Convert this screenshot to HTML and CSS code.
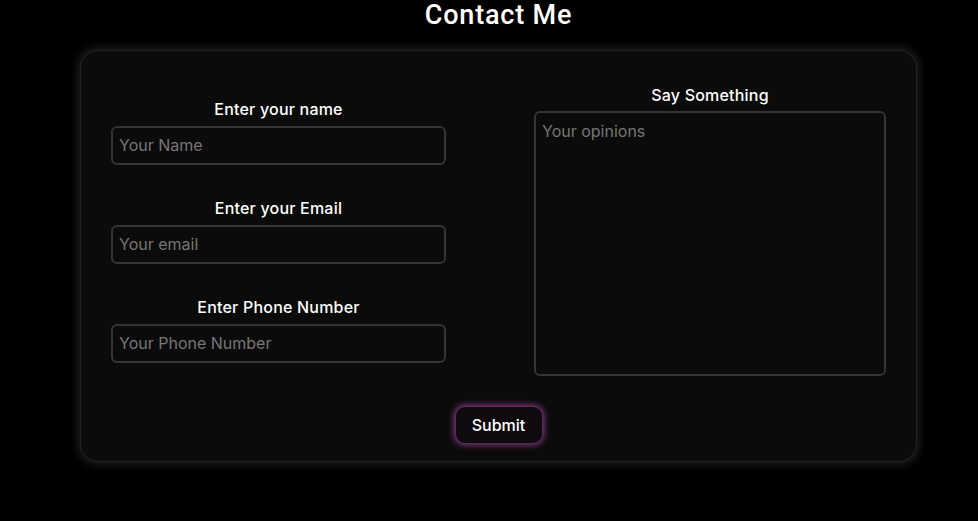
FILE: index.html
```html
<!DOCTYPE html>
<html lang="en">
<head>
<meta charset="utf-8">
<title>Contact Me</title>
<link rel="stylesheet" href="styles.css">
</head>
<body>
<h1 class="title">Contact Me</h1>
<form class="card">
  <div class="columns">
    <div class="left">
      <div class="field">
        <label class="label">Enter your name</label>
        <input class="input" type="text" placeholder="Your Name">
      </div>
      <div class="field">
        <label class="label">Enter your Email</label>
        <input class="input" type="text" placeholder="Your email">
      </div>
      <div class="field">
        <label class="label">Enter Phone Number</label>
        <input class="input" type="text" placeholder="Your Phone Number">
      </div>
    </div>
    <div class="right">
      <label class="label">Say Something</label>
      <textarea class="textarea" placeholder="Your opinions"></textarea>
    </div>
  </div>
  <div class="actions">
    <button class="submit" type="button">Submit</button>
  </div>
</form>
</body>
</html>
```
FILE: styles.css
```css
* { box-sizing: border-box; }
html, body { margin: 0; padding: 0; background: #000; }
body {
  font-family: Inter, "Noto Sans", sans-serif;
  color: #fff;
  height: 521px;
  overflow: hidden;
}
.title {
  margin: 0;
  height: 50px;
  padding: 0 0 0 19px;
  text-align: center;
  font-family: Roboto, "Noto Sans", sans-serif;
  font-weight: 500;
  font-size: 27px;
  line-height: 31px;
  letter-spacing: 0.8px;
}
.card {
  width: 837px;
  margin: 0 0 0 80px;
  height: 412px;
  background: #0b0b0b;
  border: 1px solid #222;
  border-radius: 18px;
  box-shadow: 0 0 10px 2px rgba(60, 60, 60, 0.55);
  padding: 34px 30px 0 30px;
}
.columns {
  display: flex;
  justify-content: space-between;
  align-items: center;
}
.left {
  width: 335px;
  display: flex;
  flex-direction: column;
  gap: 33px;
}
.field { display: flex; flex-direction: column; align-items: center; }
.label {
  font-size: 16px;
  font-weight: 500;
  line-height: 20px;
  margin-bottom: 7px;
  letter-spacing: 0.2px;
}
.input {
  width: 100%;
  height: 39px;
  background: #0b0b0b;
  border: 2px solid #343434;
  border-radius: 6px;
  color: #fff;
  font-family: Inter, "Noto Sans", sans-serif;
  font-size: 16px;
  padding: 0 6px;
  outline: none;
}
.right {
  width: 352px;
  display: flex;
  flex-direction: column;
  align-items: center;
}
.right .label { margin-bottom: 6px; }
.textarea {
  width: 100%;
  height: 265px;
  background: #0b0b0b;
  border: 2px solid #343434;
  border-radius: 6px;
  color: #fff;
  font-family: Inter, "Noto Sans", sans-serif;
  font-size: 16px;
  padding: 8px 6px;
  resize: none;
  outline: none;
}
::placeholder { color: #767676; }
.actions {
  display: flex;
  justify-content: center;
  margin-top: 30px;
}
.submit {
  width: 88px;
  height: 38px;
  background: #0e0a0e;
  color: #fff;
  border: 1px solid #5a2a5a;
  border-radius: 10px;
  box-shadow: 0 0 6px 1px rgba(170, 70, 170, 0.75);
  font-family: Inter, "Noto Sans", sans-serif;
  font-size: 16px;
  font-weight: 500;
  cursor: pointer;
}
```
